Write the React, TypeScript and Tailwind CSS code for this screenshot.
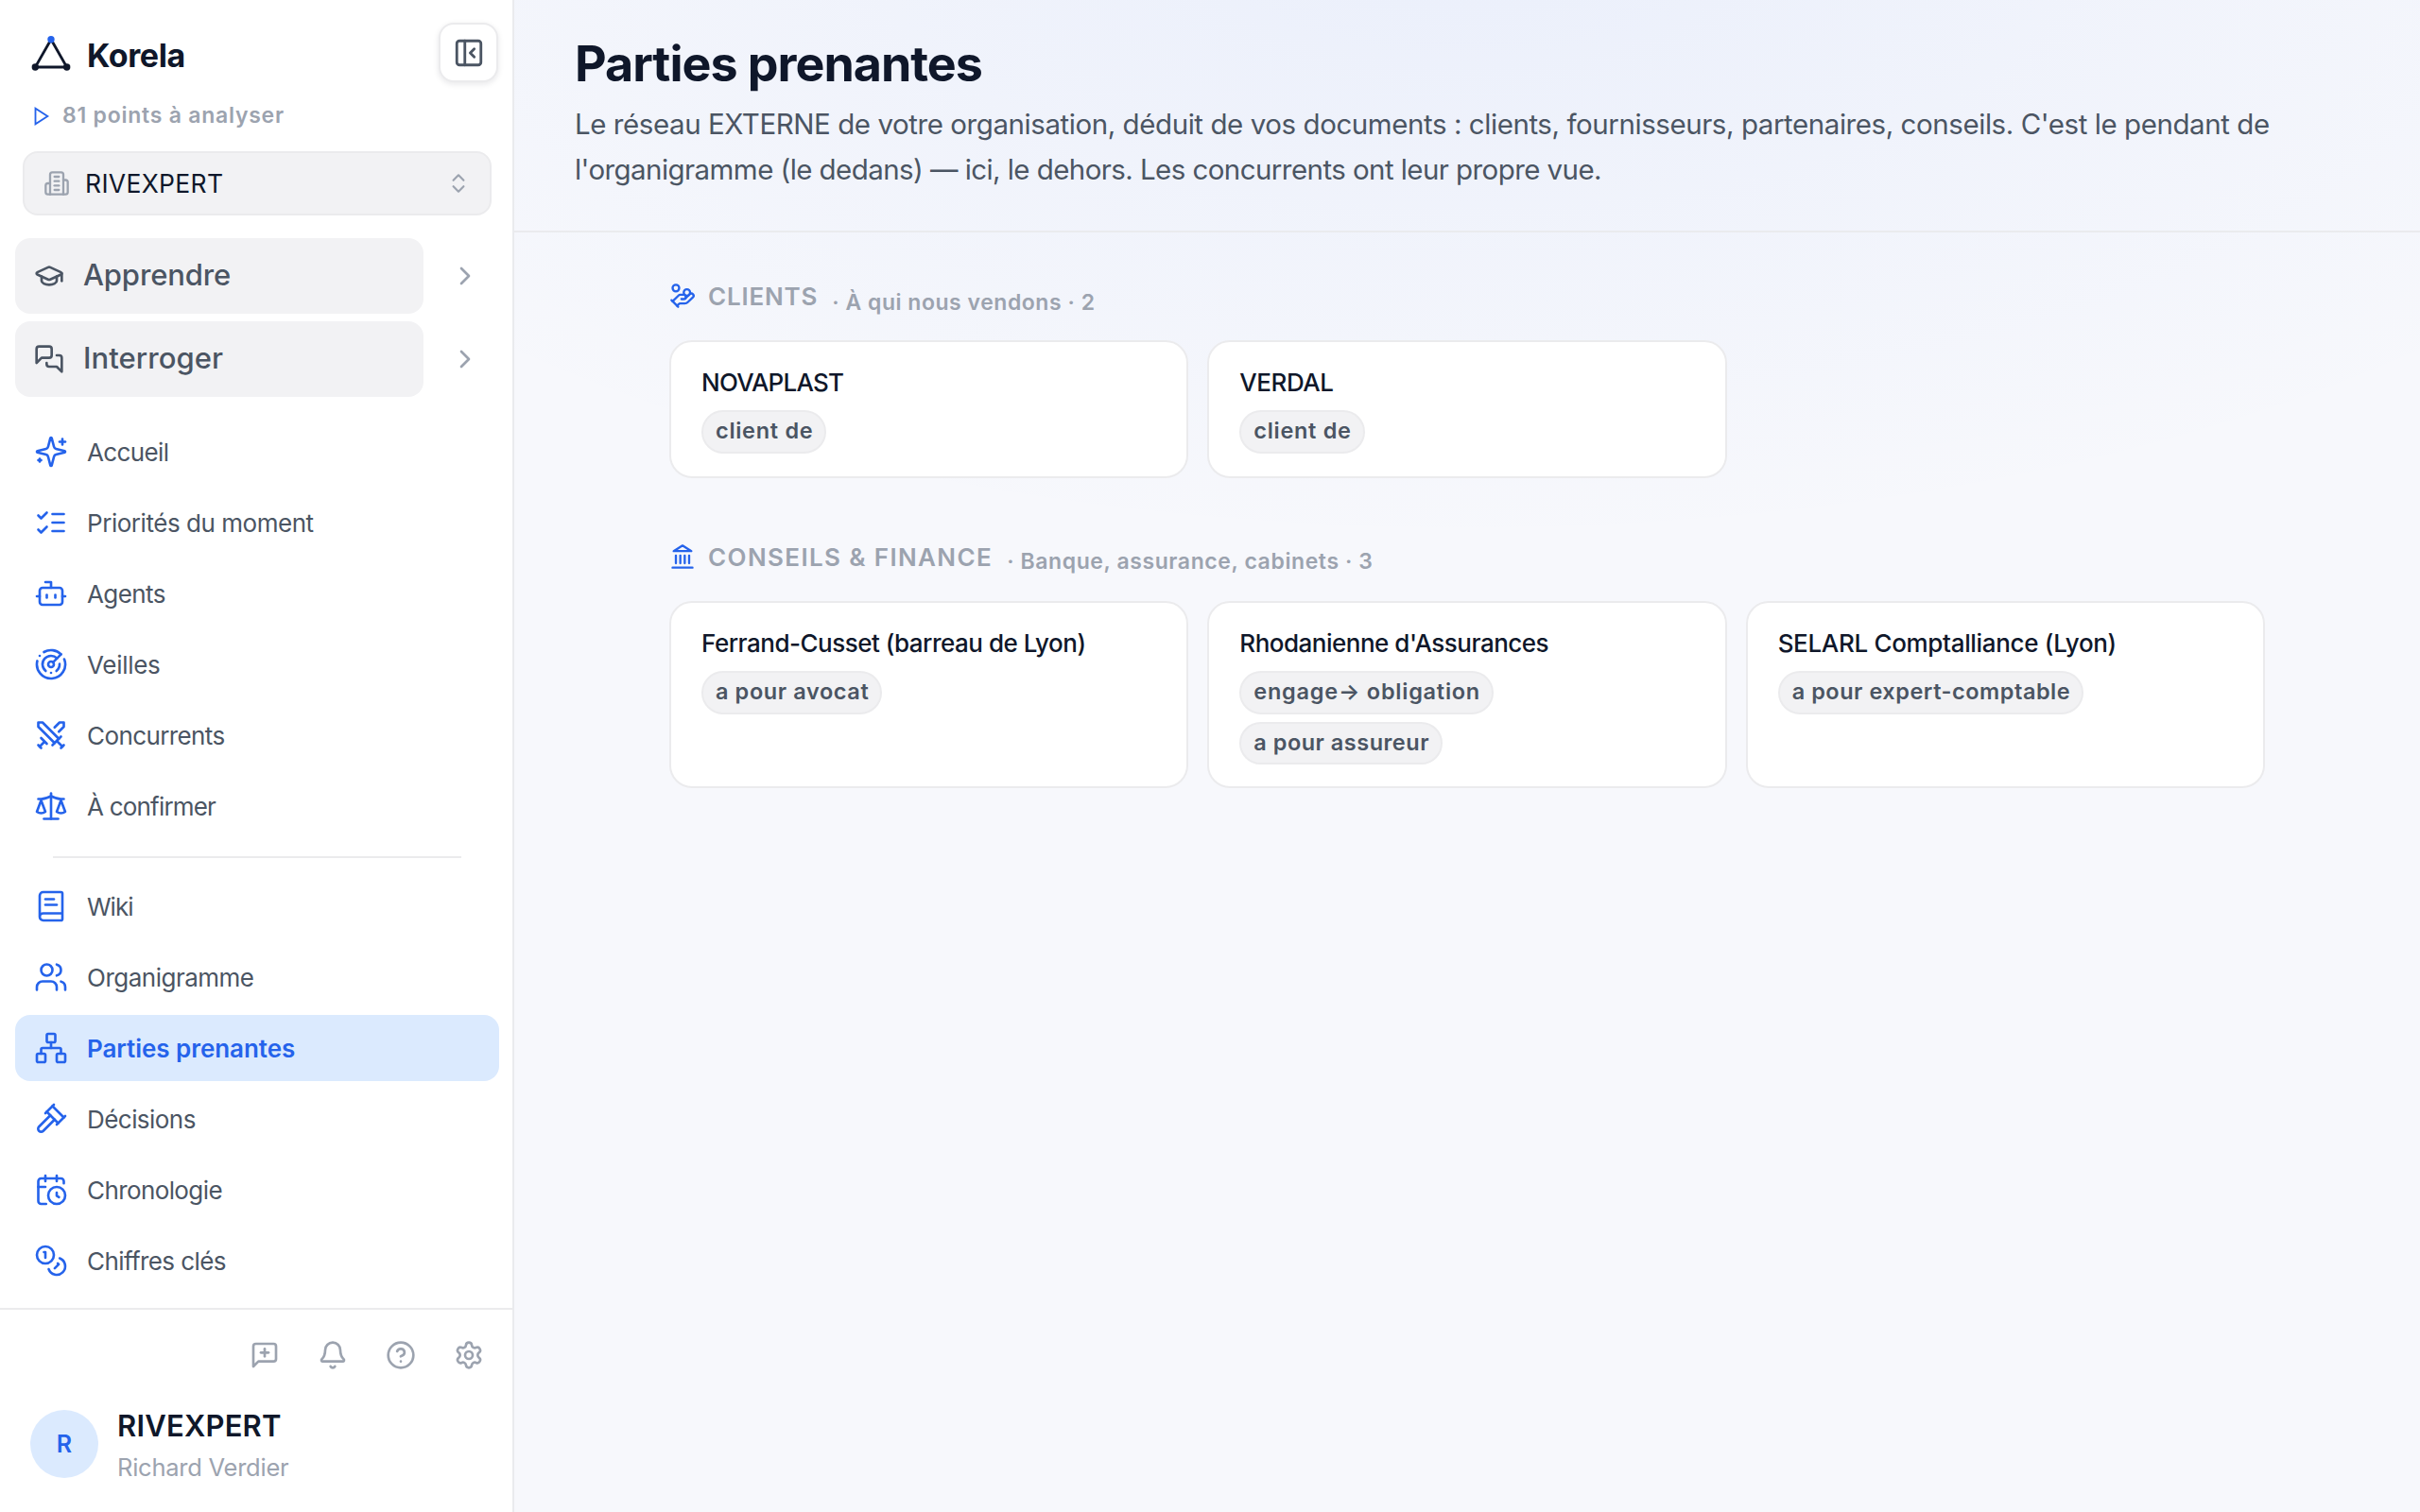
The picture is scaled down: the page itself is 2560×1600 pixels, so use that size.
import React from "react";
import {
  Bell,
  BookText,
  Bot,
  CalendarClock,
  ChevronRight,
  ChevronsUpDown,
  CircleQuestionMark,
  GraduationCap,
  HandCoins,
  Network,
  PanelLeftClose,
  Radar,
  Settings,
  Swords,
  Users,
} from "lucide-react";

type IconProps = { className?: string; strokeWidth?: number };

const Stroke = ({
  className,
  strokeWidth = 2,
  children,
}: IconProps & { children: React.ReactNode }) => (
  <svg
    viewBox="0 0 24 24"
    fill="none"
    stroke="currentColor"
    strokeWidth={strokeWidth}
    strokeLinecap="round"
    strokeLinejoin="round"
    className={className}
  >
    {children}
  </svg>
);

const Sparkles = (p: IconProps) => (
  <Stroke {...p}>
    <path d="M9.937 15.5A2 2 0 0 0 8.5 14.063l-6.135-1.582a.5.5 0 0 1 0-.962L8.5 9.936A2 2 0 0 0 9.937 8.5l1.582-6.135a.5.5 0 0 1 .963 0L14.063 8.5A2 2 0 0 0 15.5 9.937l6.135 1.581a.5.5 0 0 1 0 .964L15.5 14.063a2 2 0 0 0-1.437 1.437l-1.582 6.135a.5.5 0 0 1-.963 0z" />
    <path d="M20 3v4" />
    <path d="M22 5h-4" />
    <path d="M4 17v2" />
    <path d="M5 18H3" />
  </Stroke>
);

const ListChecks = (p: IconProps) => (
  <Stroke {...p}>
    <path d="m3 17 2 2 4-4" />
    <path d="m3 7 2 2 4-4" />
    <path d="M13 6h8" />
    <path d="M13 12h8" />
    <path d="M13 18h8" />
  </Stroke>
);

const Scale = (p: IconProps) => (
  <Stroke {...p}>
    <path d="m16 16 3-8 3 8c-.87.65-1.92 1-3 1s-2.13-.35-3-1Z" />
    <path d="m2 16 3-8 3 8c-.87.65-1.92 1-3 1s-2.13-.35-3-1Z" />
    <path d="M7 21h10" />
    <path d="M12 3v18" />
    <path d="M3 7h2c2 0 5-1 7-2 2 1 5 2 7 2h2" />
  </Stroke>
);

const Gavel = (p: IconProps) => (
  <Stroke {...p}>
    <path d="m14.5 12.5-8 8a2.119 2.119 0 1 1-3-3l8-8" />
    <path d="m16 16 6-6" />
    <path d="m8 8 6-6" />
    <path d="m9 7 8 8" />
    <path d="m21 11-8-8" />
  </Stroke>
);

const Coins = (p: IconProps) => (
  <Stroke {...p}>
    <circle cx="8" cy="8" r="6" />
    <path d="M18.09 10.37A6 6 0 1 1 10.34 18" />
    <path d="M7 6h1v4" />
    <path d="m16.71 13.88.7.71-2.82 2.82" />
  </Stroke>
);

const Building = (p: IconProps) => (
  <Stroke {...p}>
    <path d="M6 22V4a2 2 0 0 1 2-2h8a2 2 0 0 1 2 2v18Z" />
    <path d="M6 12H4a2 2 0 0 0-2 2v6a2 2 0 0 0 2 2h2" />
    <path d="M18 9h2a2 2 0 0 1 2 2v9a2 2 0 0 1-2 2h-2" />
    <path d="M10 6h4" />
    <path d="M10 10h4" />
    <path d="M10 14h4" />
    <path d="M10 18h4" />
  </Stroke>
);

const Messages = (p: IconProps) => (
  <Stroke {...p}>
    <path d="M14 9a2 2 0 0 1-2 2H6l-4 4V4a2 2 0 0 1 2-2h8a2 2 0 0 1 2 2z" />
    <path d="M18 9h2a2 2 0 0 1 2 2v11l-4-4h-6a2 2 0 0 1-2-2v-1" />
  </Stroke>
);

const MessagePlus = (p: IconProps) => (
  <Stroke {...p}>
    <path d="M21 15a2 2 0 0 1-2 2H7l-4 4V5a2 2 0 0 1 2-2h14a2 2 0 0 1 2 2z" />
    <path d="M12 7v6" />
    <path d="M9 10h6" />
  </Stroke>
);

const Landmark = (p: IconProps) => (
  <Stroke {...p}>
    <path d="M3 22h18" />
    <path d="M6 18v-7" />
    <path d="M10 18v-7" />
    <path d="M14 18v-7" />
    <path d="M18 18v-7" />
    <path d="m12 2 8 5H4z" />
  </Stroke>
);

const Logo = () => (
  <svg viewBox="0 0 42 42" className="h-[42px] w-[42px]">
    <path
      d="M21 7.7 4.3 37h33.4z"
      fill="none"
      stroke="#0f172a"
      strokeWidth="2.8"
    />
    <circle cx="4.3" cy="37" r="3.7" fill="#0f172a" />
    <circle cx="37.7" cy="37" r="3.7" fill="#0f172a" />
    <circle cx="21" cy="7.7" r="3.7" fill="#2563eb" />
  </svg>
);

const mainNav = [
  { icon: Sparkles, label: "Accueil", text: "tracking-[-0.64px]" },
  { icon: ListChecks, label: "Priorités du moment", text: "tracking-[-0.46px]" },
  { icon: Bot, label: "Agents", text: "tracking-[-0.6px]" },
  { icon: Radar, label: "Veilles", text: "tracking-[-0.3px]" },
  { icon: Swords, label: "Concurrents", text: "tracking-[-0.6px]" },
  { icon: Scale, label: "À confirmer", text: "tracking-[-0.8px]" },
];

const orgNav = [
  { icon: BookText, label: "Wiki", text: "tracking-[-1px]" },
  { icon: Users, label: "Organigramme", text: "tracking-[-0.5px]" },
  {
    icon: Network,
    label: "Parties prenantes",
    text: "tracking-[-0.05px]",
    active: true,
  },
  { icon: Gavel, label: "Décisions", text: "tracking-[-0.55px]" },
  { icon: CalendarClock, label: "Chronologie", text: "tracking-[-0.6px]" },
  { icon: Coins, label: "Chiffres clés", text: "tracking-[-0.58px]" },
];

const sections = [
  {
    icon: HandCoins,
    title: "CLIENTS",
    titleText: "tracking-[0.8px]",
    hint: "· À qui nous vendons · 2",
    hintText: "tracking-[0.53px] pt-[14px]",
    cards: [
      {
        name: "NOVAPLAST",
        text: "tracking-[-0.77px]",
        tags: [{ label: "client de", text: "tracking-[0.7px]" }],
      },
      {
        name: "VERDAL",
        text: "tracking-[-0.44px]",
        tags: [{ label: "client de", text: "tracking-[0.7px]" }],
      },
    ],
  },
  {
    icon: Landmark,
    title: "CONSEILS & FINANCE",
    titleText: "tracking-[1.37px]",
    hint: "· Banque, assurance, cabinets · 3",
    hintText: "tracking-[0.6px] pt-[11px]",
    cards: [
      {
        name: "Ferrand-Cusset (barreau de Lyon)",
        text: "tracking-[-0.5px]",
        tags: [{ label: "a pour avocat", text: "tracking-[0.6px]" }],
      },
      {
        name: "Rhodanienne d'Assurances",
        text: "tracking-[-0.5px]",
        tags: [
          { label: "engage→ obligation", text: "tracking-[0.76px]" },
          { label: "a pour assureur", text: "tracking-[0.5px]" },
        ],
      },
      {
        name: "SELARL Comptalliance (Lyon)",
        text: "tracking-[-0.33px]",
        tags: [{ label: "a pour expert-comptable", text: "tracking-[0.53px]" }],
      },
    ],
  },
];

const NavList = ({ items }: { items: (typeof orgNav)[number][] }) => (
  <ul className="flex flex-col gap-[5px] pl-4 pr-[14px]">
    {items.map(({ icon: Icon, label, text, active }) => (
      <li
        key={label}
        className={`flex h-[70px] items-center gap-5 rounded-2xl pl-5 text-[26px] ${
          active ? "bg-[#dbeafe] font-semibold text-[#2563eb]" : "text-[#4b5563]"
        }`}
      >
        <Icon className="h-9 w-9 text-[#2563eb]" strokeWidth={1.75} />
        <span className={text}>{label}</span>
      </li>
    ))}
  </ul>
);

const Sidebar = () => {
  return (
    <aside className="flex h-full w-[544px] shrink-0 flex-col border-r-2 border-[#eaebee] bg-white">
      <div className="mt-6 flex h-[62px] items-center pl-[33px] pr-[15px]">
        <Logo />
        <span className="ml-[17px] pt-[7px] text-[34px] font-bold tracking-[-0.4px] text-[#0f172a]">
          Korela
        </span>
        <button className="ml-auto flex h-[63px] w-[63px] items-center justify-center rounded-2xl border-2 border-[#ebebed] bg-white pl-px pt-px text-[#4b5563] shadow-[0_2px_6px_rgba(15,23,42,0.1)]">
          <PanelLeftClose className="h-[34px] w-[34px]" />
        </button>
      </div>

      <div className="mt-[18px] flex h-9 items-center gap-3 pl-8">
        <svg
          viewBox="0 0 24 24"
          fill="none"
          stroke="#2563eb"
          strokeWidth="2"
          className="mt-[2px] h-[22px] w-[22px]"
        >
          <path d="M6 3v18l14-9z" />
        </svg>
        <span className="text-[23px] font-semibold tracking-[0.76px] text-[#9ca3af]">
          81 points à analyser
        </span>
      </div>

      <div className="ml-6 mr-[22px] mt-5 flex h-[68px] items-center rounded-2xl border-2 border-[#ebebed] bg-[#f2f2f4] px-5 text-[#9ca3af]">
        <Building className="h-7 w-7" />
        <span className="ml-4 pt-px text-[26.5px] tracking-[0.33px] text-[#0f172a]">
          RIVEXPERT
        </span>
        <ChevronsUpDown className="ml-auto h-[26px] w-[26px]" />
      </div>

      <div className="mt-6 flex flex-col gap-2 pl-4 text-[31px] font-medium text-[#4b5563]">
        <div className="flex items-center gap-7">
          <div className="flex h-20 w-[432px] items-center gap-5 rounded-2xl bg-[#f2f2f4] pl-5">
            <GraduationCap className="h-8 w-8" />
            <span className="pb-[2px] tracking-[-0.14px]">Apprendre</span>
          </div>
          <ChevronRight className="h-8 w-8 text-[#9ca3af]" />
        </div>
        <div className="flex items-center gap-7">
          <div className="flex h-20 w-[432px] items-center gap-5 rounded-2xl bg-[#f2f2f4] pl-5">
            <Messages className="h-8 w-8" />
            <span className="pb-[2px] tracking-[0.06px]">Interroger</span>
          </div>
          <ChevronRight className="h-8 w-8 text-[#9ca3af]" />
        </div>
      </div>

      <nav className="mt-[23px] flex-1">
        <NavList items={mainNav} />
        <div className="mb-4 ml-14 mt-[18px] h-[2px] w-[432px] bg-[#ebebed]" />
        <NavList items={orgNav} />
      </nav>

      <div className="h-[216px] border-t-2 border-[#ebebed]">
        <div className="flex justify-end gap-10 pr-[30px] pt-8 text-[#9ca3af]">
          <MessagePlus className="h-8 w-8" />
          <Bell className="h-8 w-8" />
          <CircleQuestionMark className="h-8 w-8" />
          <Settings className="h-8 w-8" />
        </div>
        <div className="mt-[42px] flex h-[72px] items-center gap-5 pl-8">
          <div className="flex h-[72px] w-[72px] items-center justify-center rounded-full bg-[#dbeafe] pt-[2px] text-[25px] font-semibold text-[#2563eb]">
            R
          </div>
          <div className="pt-[5px] leading-[44px]">
            <p className="text-[31px] font-semibold tracking-[0.2px] text-[#0f172a]">
              RIVEXPERT
            </p>
            <p className="text-[25.5px] leading-[44px] tracking-[-0.25px] text-[#9ca3af]">
              Richard Verdier
            </p>
          </div>
        </div>
      </div>
    </aside>
  );
};

const Main = () => {
  return (
    <main className="h-full flex-1 bg-[#f7f8fc] bg-[radial-gradient(ellipse_1450px_640px_at_50%_-60px,rgba(37,99,235,0.06),rgba(37,99,235,0))]">
      <header className="h-[246px] border-b-2 border-[#eaebee] pl-16 pt-[37px]">
        <h1 className="text-[52px] font-bold leading-[62px] tracking-[-1.02px] text-[#0f172a]">
          Parties prenantes
        </h1>
        <p className="mt-[7.5px] whitespace-nowrap text-[29.5px] leading-[48px] text-[#4b5563]">
          <span className="block tracking-[-0.435px]">
            Le réseau EXTERNE de votre organisation, déduit de vos documents :
            clients, fournisseurs, partenaires, conseils. C'est le pendant de
          </span>
          <span className="block tracking-[-0.57px]">
            l'organigramme (le dedans) — ici, le dehors. Les concurrents ont
            leur propre vue.
          </span>
        </p>
      </header>

      <div className="mx-auto flex w-[1688px] flex-col gap-[63px] pt-[47px]">
        {sections.map(({ icon: Icon, ...section }) => (
          <section key={section.title}>
            <div className="flex h-10 items-center text-[#9ca3af]">
              <Icon className="h-7 w-7 text-[#2563eb]" />
              <h2
                className={`ml-[13px] text-[26px] font-semibold ${section.titleText}`}
              >
                {section.title}
              </h2>
              <span
                className={`ml-[15px] text-[23px] font-semibold ${section.hintText}`}
              >
                {section.hint}
              </span>
            </div>
            <div className="mt-[27px] grid grid-cols-3 gap-5">
              {section.cards.map((card) => (
                <div
                  key={card.name}
                  className="min-h-[146px] rounded-3xl border-2 border-[#ebebed] bg-white px-8 pb-[23px] pt-[22.5px]"
                >
                  <h3
                    className={`text-[26px] font-medium leading-10 text-[#0f172a] ${card.text}`}
                  >
                    {card.name}
                  </h3>
                  <div className="mt-[9.5px] flex flex-wrap gap-2">
                    {card.tags.map((tag) => (
                      <span
                        key={tag.label}
                        className={`flex h-[45.5px] items-center rounded-full border-2 border-[#ebebed] bg-[#f2f2f4] pb-[2px] pl-[13px] pr-3 text-[23.5px] font-semibold text-[#4b5563] ${tag.text}`}
                      >
                        {tag.label}
                      </span>
                    ))}
                  </div>
                </div>
              ))}
            </div>
          </section>
        ))}
      </div>
    </main>
  );
};

const App = () => {
  return (
    <div className="flex h-[1600px] w-[2560px] overflow-hidden font-['Inter','Liberation_Sans',sans-serif]">
      <Sidebar />
      <Main />
    </div>
  );
};

export default App;
